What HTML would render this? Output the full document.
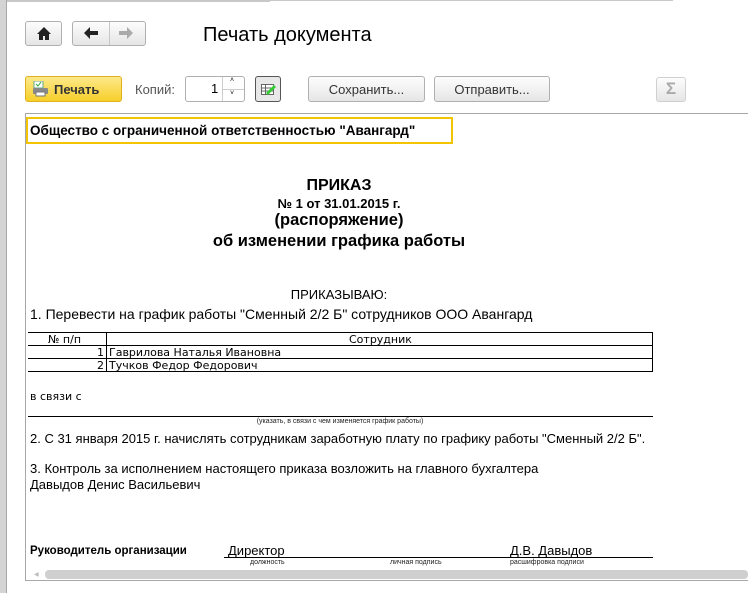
<!DOCTYPE html>
<html><head><meta charset="utf-8"><style>
*{margin:0;padding:0;box-sizing:border-box}
body{width:748px;height:593px;background:#fff;position:relative;overflow:hidden;font-family:"Liberation Sans",sans-serif;color:#000}
.a{position:absolute;white-space:nowrap}
.btn{position:absolute;border:1px solid #b0b0b0;border-radius:3px;background:linear-gradient(#fdfdfd,#e6e6e6);font-size:13px;color:#333;text-align:center}
.c{transform:translateX(-50%)}
.hl{position:absolute;height:1px;background:#000}
.vl{position:absolute;width:1px;background:#000}
.doc{font-size:13px}
.sm{font-size:7px;color:#222}
</style></head><body>
<div class="a" style="left:0;top:0;width:7px;height:593px;background:#d4d4d4;border-right:1px solid #a8a8a8"></div>
<div class="a" style="left:7px;top:0;width:263px;height:2px;background:#c8c8c8"></div>
<div class="a" style="left:270px;top:0;width:403px;height:1px;background:#c8c8c8"></div>

<div class="btn" style="left:25px;top:21px;width:37px;height:25px">
<svg width="14" height="13" viewBox="0 0 14 13" style="margin-top:5px"><path d="M7 0L0 7h2v6h4V9h2v4h4V7h2z" fill="#222"/></svg></div>
<div class="btn" style="left:72px;top:21px;width:74px;height:25px"></div>
<div class="a" style="left:109px;top:22px;width:1px;height:23px;background:#c8c8c8"></div>
<svg class="a" style="left:84px;top:27px" width="14" height="12" viewBox="0 0 14 12"><path d="M0 6L6 0v4h8v4H6v4z" fill="#222"/></svg>
<svg class="a" style="left:119px;top:27px" width="14" height="12" viewBox="0 0 14 12"><path d="M14 6L8 0v4H0v4h8v4z" fill="#aaa"/></svg>
<div class="a" style="left:203px;top:24px;font-size:20px">Печать документа</div>

<div class="btn" style="left:25px;top:76px;width:97px;height:26px;background:linear-gradient(#fde98a,#f7cf2a);border-color:#e0b020;font-weight:bold;color:#333;text-align:left;padding:5px 0 0 28px">Печать</div>
<svg class="a" style="left:32px;top:81px" width="17" height="16" viewBox="0 0 17 16"><rect x="2" y="0" width="9" height="7" fill="#fff" stroke="#6a8" /><path d="M4 3l2 2 3-4" stroke="#3a3" fill="none"/><rect x="1" y="7" width="15" height="6" rx="1" fill="#888"/><rect x="4" y="11" width="9" height="4" fill="#fff" stroke="#777"/></svg>
<div class="a" style="left:135px;top:82px;font-size:13px;color:#555">Копий:</div>
<div class="a" style="left:185px;top:76px;width:60px;height:26px;border:1px solid #b0b0b0;border-radius:3px;background:#fff"></div>
<div class="a" style="left:211px;top:81px;font-size:13px">1</div>
<div class="a" style="left:222px;top:77px;width:1px;height:24px;background:#ccc"></div>
<div class="a" style="left:222px;top:89px;width:22px;height:1px;background:#ccc"></div>
<div class="a" style="left:230px;top:77px;font-size:7px">˄</div>
<div class="a" style="left:230px;top:90px;font-size:7px">˅</div>
<div class="btn" style="left:255px;top:76px;width:26px;height:26px;border-color:#555;background:#e8e8e8"></div>
<svg class="a" style="left:261px;top:82px" width="16" height="15" viewBox="0 0 16 15"><rect x="0.5" y="2.5" width="12" height="10" fill="#fff" stroke="#666"/><path d="M0.5 6h12M0.5 9h12M4.5 2.5v10" stroke="#666"/><path d="M7 13l8-8-2-2-8 8z" fill="#3c3"/></svg>
<div class="btn" style="left:308px;top:76px;width:117px;height:26px;padding-top:5px">Сохранить...</div>
<div class="btn" style="left:434px;top:76px;width:116px;height:26px;padding-top:5px">Отправить...</div>
<div class="btn" style="left:656px;top:77px;width:30px;height:25px;border-color:#d0d0d0;color:#aaa;font-size:17px;font-weight:bold;padding-top:1px">Σ</div>

<div class="a" style="left:25px;top:113px;width:723px;height:468px;border:1px solid #a8a8a8;border-right:none"></div>
<div class="a" style="left:26px;top:117px;width:427px;height:27px;border:2px solid #f5c400"></div>
<div class="a" style="left:30px;top:123px;font-size:13.5px;font-weight:bold">Общество с ограниченной ответственностью "Авангард"</div>

<div class="a c" style="left:339px;top:177px;font-size:16px;font-weight:bold">ПРИКАЗ</div>
<div class="a c" style="left:339px;top:196px;font-size:13px;font-weight:bold">№ 1 от 31.01.2015 г.</div>
<div class="a c" style="left:339px;top:211px;font-size:16.5px;font-weight:bold">(распоряжение)</div>
<div class="a c" style="left:339px;top:232px;font-size:16.5px;font-weight:bold">об изменении графика работы</div>
<div class="a doc c" style="left:339px;top:287px">ПРИКАЗЫВАЮ:</div>
<div class="a" style="left:30px;top:306px;font-size:14px">1. Перевести на график работы "Сменный 2/2 Б" сотрудников ООО Авангард</div>

<div class="hl" style="left:28px;top:332px;width:625px"></div>
<div class="hl" style="left:28px;top:345px;width:625px"></div>
<div class="hl" style="left:28px;top:358px;width:625px"></div>
<div class="hl" style="left:28px;top:371px;width:625px"></div>
<div class="vl" style="left:106px;top:332px;height:39px"></div>
<div class="vl" style="left:652px;top:332px;height:39px"></div>
<div class="a" style="left:0;top:333px;font-size:11px;width:748px;font-family:'DejaVu Sans',sans-serif">
<span class="a" style="left:48px">№ п/п</span><span class="a" style="left:349px">Сотрудник</span></div>
<div class="a" style="left:97px;top:346px;font-size:11px;font-family:'DejaVu Sans',sans-serif">1</div>
<div class="a" style="left:109px;top:346px;font-size:11px;font-family:'DejaVu Sans',sans-serif">Гаврилова Наталья Ивановна</div>
<div class="a" style="left:97px;top:359px;font-size:11px;font-family:'DejaVu Sans',sans-serif">2</div>
<div class="a" style="left:109px;top:359px;font-size:11px;font-family:'DejaVu Sans',sans-serif">Тучков Федор Федорович</div>

<div class="a" style="left:30px;top:390px;font-size:11px;font-family:'DejaVu Sans',sans-serif">в связи с</div>
<div class="hl" style="left:28px;top:416px;width:625px"></div>
<div class="a sm c" style="left:340px;top:418px">(указать, в связи с чем изменяется график работы)</div>
<div class="a doc" style="left:30px;top:431px">2. С 31 января 2015 г. начислять сотрудникам заработную плату по графику работы "Сменный 2/2 Б".</div>
<div class="a doc" style="left:30px;top:461px">3. Контроль за исполнением настоящего приказа возложить на главного бухгалтера</div>
<div class="a doc" style="left:30px;top:477px">Давыдов Денис Васильевич</div>

<div class="a" style="left:30px;top:545px;font-size:11.5px;font-weight:bold">Руководитель организации</div>
<div class="a doc" style="left:228px;top:543px">Директор</div>
<div class="a doc" style="left:510px;top:543px">Д.В. Давыдов</div>
<div class="hl" style="left:224px;top:557px;width:429px"></div>
<div class="a sm" style="left:250px;top:559px">должность</div>
<div class="a sm" style="left:390px;top:559px">личная подпись</div>
<div class="a sm" style="left:510px;top:559px">расшифровка подписи</div>

<div class="a" style="left:45px;top:570px;width:703px;height:9px;background:#cfcfcf;border-radius:4px"></div>
<div class="a" style="left:34px;top:571px;font-size:6px;color:#bbb">◀</div>
</body></html>
